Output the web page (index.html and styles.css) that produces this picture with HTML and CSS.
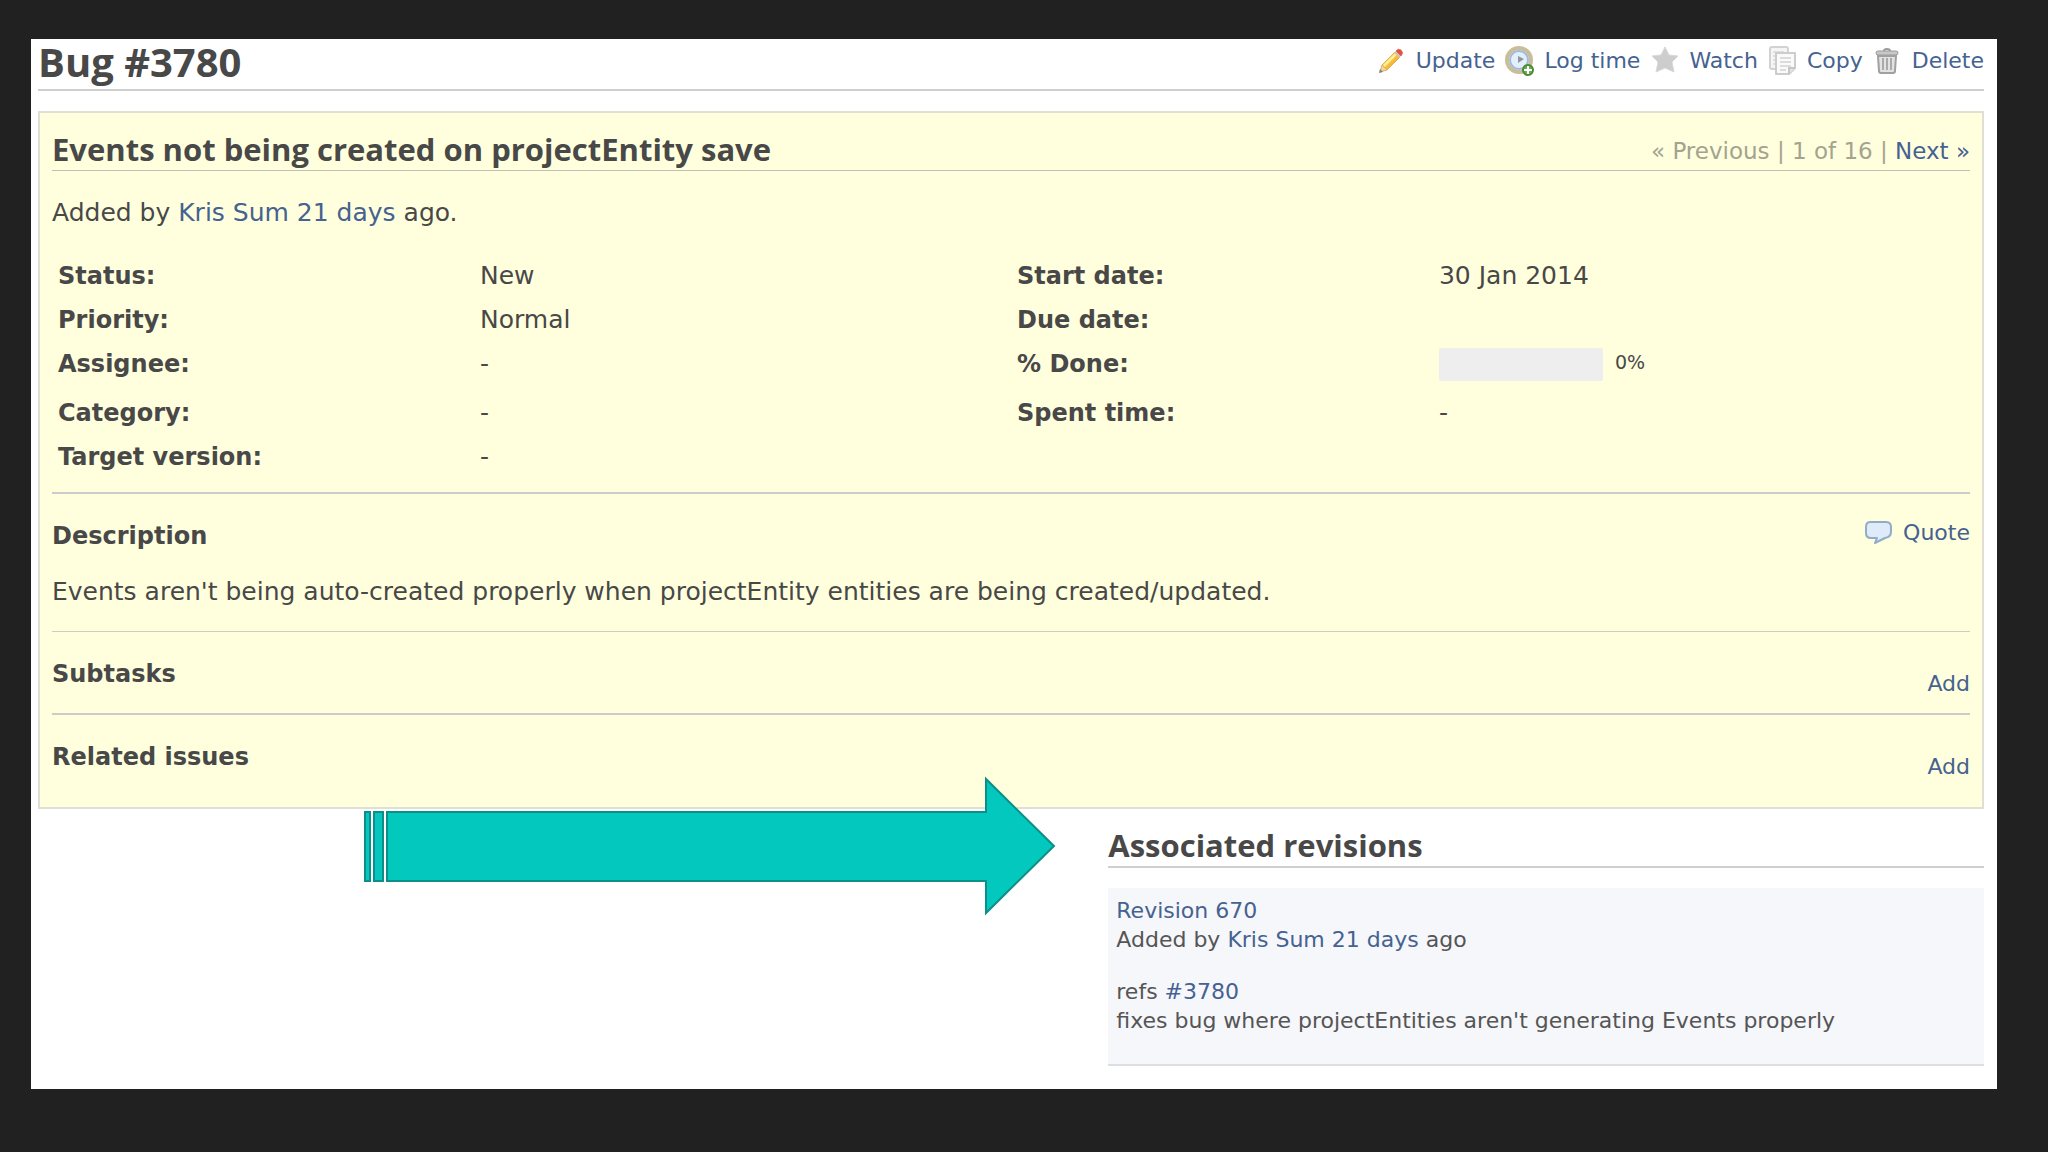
FILE: index.html
```html
<!DOCTYPE html>
<html lang="en">
<head>
    <meta charset="UTF-8">
    <meta name="viewport" content="width=device-width, initial-scale=1.0">
    <title>Bug #3780</title>
    <link rel="stylesheet" href="styles.css">
</head>
<body>
    <main class="page">
        <!-- Page header -->
        <header class="page-header">
            <h1>Bug #3780</h1>
            <nav class="actions">
                <a href="#update">
                    <svg class="icon" viewBox="0 0 30 30" aria-hidden="true">
                        <defs>
                            <linearGradient id="pencil" x1="0" y1="0" x2="1" y2="1">
                                <stop offset="0.3" stop-color="#ffe37a"/>
                                <stop offset="0.7" stop-color="#f3a71c"/>
                            </linearGradient>
                        </defs>
                        <path d="M4 26 L6 19 L11 24 Z" fill="#eed7a4" stroke="#d3b170"/>
                        <path d="M3 27 L4 23 L7 26 Z" fill="#8b8068"/>
                        <path d="M6 19 L19 6 L24 11 L11 24 Z" fill="url(#pencil)" stroke="#e8b04a"/>
                        <path d="M8 20 L21 7" stroke="#fff2a8" stroke-width="2"/>
                        <path d="M18 7 L20 5 L25 10 L23 12 Z" fill="#d9c0b4"/>
                        <path d="M20 5 Q22 2 25 4 Q28 7 25 10 Z" fill="#e0503c" stroke="#d9705e"/>
                    </svg>
                    Update</a>
                <a href="#log-time">
                    <svg class="icon" viewBox="0 0 30 30" aria-hidden="true">
                        <circle cx="15" cy="14" r="12" fill="#eef4fb" stroke="#cbbd98" stroke-width="4"/>
                        <circle cx="15" cy="14" r="9" fill="#e4effb" stroke="#9dbbdd" stroke-width="2"/>
                        <path d="M14 10 L20 13 L14 17 Z" fill="#8997a6"/>
                        <circle cx="24" cy="24" r="5" fill="#6cb04f" stroke="#4a8a38" stroke-width="2"/>
                        <path d="M24 20 V28 M20 24 H28" stroke="#fff" stroke-width="2"/>
                    </svg>
                    Log time</a>
                <a href="#watch">
                    <svg class="icon" viewBox="0 0 30 30" aria-hidden="true">
                        <path d="M16 1 L20 9 L29 10 L23 16 L25 26 L16 22 L7 26 L9 16 L3 10 L12 9 Z" fill="#cdcdcd" stroke="#d9d9d9" stroke-linejoin="round"/>
                    </svg>
                    Watch</a>
                <a href="#copy">
                    <svg class="icon" viewBox="0 0 30 30" aria-hidden="true">
                        <rect x="3" y="1" width="18" height="22" rx="2" fill="#f5f5f5" stroke="#d2d2d2" stroke-width="2"/>
                        <path d="M6 6 H17 M6 10 H8 M6 14 H8 M6 18 H8" stroke="#e0e0e0" stroke-width="2"/>
                        <path d="M9 7 H28 V22 L22 28 H9 Z" fill="#fafafa" stroke="#cccccc" stroke-width="2" stroke-linejoin="round"/>
                        <path d="M13 12 H24 M13 16 H24 M13 20 H24 M13 24 H19" stroke="#dcdcdc" stroke-width="2"/>
                        <path d="M28 22 H22 V28" fill="#e5e5e5" stroke="#c6c6c6" stroke-width="2"/>
                    </svg>
                    Copy</a>
                <a href="#delete">
                    <svg class="icon" viewBox="0 0 30 30" aria-hidden="true">
                        <path d="M12 5 Q12 3 15 3 Q18 3 18 5" fill="none" stroke="#9c9c9c" stroke-width="2"/>
                        <rect x="4" y="5" width="22" height="4" rx="2" fill="#c8c8c8" stroke="#9a9a9a"/>
                        <path d="M6 10 H24 L23 25 Q23 27 21 27 H9 Q7 27 7 25 Z" fill="#e2e2e2" stroke="#a0a0a0" stroke-width="2"/>
                        <path d="M11 12 V24 M15 12 V24 M19 12 V24" stroke="#aaaaaa" stroke-width="2"/>
                    </svg>
                    Delete</a>
            </nav>
        </header>

        <!-- Issue details -->
        <section class="issue">
            <div class="issue-title">
                <h2>Events not being created on projectEntity save</h2>
                <div class="pager">« Previous | 1 of 16 | <a href="#next">Next »</a></div>
            </div>
            <p class="author">Added by <a href="#user">Kris Sum</a> <a href="#activity">21 days</a> ago.</p>

            <table class="attributes">
                <tr>
                    <th scope="row">Status:</th><td>New</td>
                    <th scope="row">Start date:</th><td>30 Jan 2014</td>
                </tr>
                <tr>
                    <th scope="row">Priority:</th><td>Normal</td>
                    <th scope="row">Due date:</th><td></td>
                </tr>
                <tr class="progress-row">
                    <th scope="row">Assignee:</th><td>-</td>
                    <th scope="row">% Done:</th>
                    <td>
                        <div class="progress">
                            <div class="progress-bar"></div>
                            <span>0%</span>
                        </div>
                    </td>
                </tr>
                <tr>
                    <th scope="row">Category:</th><td>-</td>
                    <th scope="row">Spent time:</th><td>-</td>
                </tr>
                <tr>
                    <th scope="row">Target version:</th><td>-</td>
                    <th></th><td></td>
                </tr>
            </table>

            <div class="block description">
                <div class="block-head">
                    <h3>Description</h3>
                    <a class="quote" href="#quote">
                        <svg class="icon" viewBox="0 0 30 30" aria-hidden="true">
                            <path d="M7 4 H23 Q28 4 28 9 V14 Q28 19 22 20 L12 25 L14 20 H8 Q3 20 3 15 V9 Q3 4 7 4 Z" fill="#dfeafa" stroke="#90acc9" stroke-width="2" stroke-linejoin="round"/>
                        </svg>
                        Quote</a>
                </div>
                <p>Events aren't being auto-created properly when projectEntity entities are being created/updated.</p>
            </div>

            <div class="block subtasks">
                <h3>Subtasks</h3>
                <a href="#add-subtask">Add</a>
            </div>

            <div class="block related">
                <h3>Related issues</h3>
                <a href="#add-relation">Add</a>
            </div>
        </section>

        <!-- Revisions -->
        <section class="changesets">
            <svg class="arrow" viewBox="0 0 692 140" aria-hidden="true">
                <g fill="#03c8be" stroke="#0c8f88" stroke-width="2">
                    <rect x="1" y="36" width="5" height="69"/>
                    <rect x="10" y="36" width="9" height="69"/>
                    <path d="M23 36 H622 V3 L690 70 L622 137 V105 H23 Z"/>
                </g>
            </svg>
            <div class="revisions">
                <h2>Associated revisions</h2>
                <div class="changeset">
                    <p><a href="#r670">Revision 670</a><br>
                    Added by <a href="#user">Kris Sum</a> <a href="#activity">21 days</a> ago</p>
                    <p>refs <a href="#3780">#3780</a><br>
                    fixes bug where projectEntities aren't generating Events properly</p>
                </div>
            </div>
        </section>
    </main>
</body>
</html>
```
FILE: styles.css
```css
* {
    box-sizing: border-box;
}

body {
    margin: 0;
    padding: 39px 51px 39px 31px;
    background: #212121;
    color: #484848;
    font-family: Verdana, "DejaVu Sans", sans-serif;
    font-size: 22px;
    line-height: 28px;
}

h1, h2, h3, p {
    margin: 0;
}

h1, h2 {
    font-family: "Trebuchet MS", "Open Sans", sans-serif;
    font-weight: 700;
}

h1 {
    font-size: 40px;
    line-height: 46px;
}

h2 {
    font-size: 31px;
    line-height: 40px;
}

h3 {
    font-size: 24px;
    line-height: 36px;
}

a {
    color: #456290;
    text-decoration: none;
}

a:hover {
    text-decoration: underline;
}

.icon {
    width: 30px;
    height: 30px;
    flex: none;
}

.page {
    background: #fff;
    padding: 0 13px 23px 7px;
}

/* Header */
.page-header {
    display: flex;
    justify-content: space-between;
    align-items: flex-start;
    height: 52px;
    border-bottom: 2px solid #cfcfcf;
}

.actions {
    display: flex;
    gap: 9px;
    padding-top: 7px;
}

.actions a,
.quote {
    display: flex;
    align-items: center;
    gap: 10px;
}

/* Issue box */
.issue {
    margin-top: 20px;
    padding: 16px 12px 26px;
    background: #ffffdd;
    border: 2px solid #dfdfd6;
}

.issue-title {
    display: flex;
    justify-content: space-between;
    align-items: flex-start;
    height: 42px;
    border-bottom: 1px solid #bfbfb4;
}

.pager {
    padding-top: 8px;
    color: #a3a390;
    font-size: 23px;
}

.author {
    margin-top: 24px;
    font-size: 25px;
    line-height: 36px;
}

.attributes {
    width: 100%;
    margin-top: 23px;
    table-layout: fixed;
    border-collapse: collapse;
    font-size: 24px;
}

.attributes th,
.attributes td {
    height: 44px;
    padding: 0 6px;
    text-align: left;
}

.attributes th {
    width: 22%;
}

.attributes td {
    width: 28%;
    font-size: 25px;
}

.attributes .progress-row > * {
    height: 49px;
    padding-bottom: 5px;
}

.progress {
    display: flex;
    gap: 12px;
    font-size: 19px;
}

.progress-bar {
    width: 164px;
    height: 33px;
    background: #eee;
    border-radius: 2px;
}

.block {
    border-top: 2px solid #ccc;
}

.block-head,
.subtasks,
.related {
    display: flex;
    justify-content: space-between;
}

.description {
    margin-top: 13px;
    padding-top: 24px;
    height: 139px;
    font-size: 25px;
}

.description p {
    margin-top: 24px;
}

.quote {
    font-size: 22px;
    height: 30px;
}

.subtasks,
.related {
    padding-top: 24px;
}

.subtasks {
    height: 82px;
    border-top-width: 1px;
}

.subtasks a,
.related a {
    margin-top: 14px;
}

/* Revisions */
.changesets {
    position: relative;
    display: flex;
    justify-content: flex-end;
    padding-top: 16px;
}

.arrow {
    position: absolute;
    left: 326px;
    top: -33px;
    width: 692px;
    height: 140px;
}

.revisions {
    width: 45%;
}

.revisions h2 {
    height: 43px;
    border-bottom: 2px solid #cfcfd2;
}

.changeset {
    margin-top: 20px;
    padding: 8px 8px 29px;
    background: #f6f7fb;
    border-bottom: 2px solid #dcdee2;
    color: #555;
    line-height: 29px;
}

.changeset p + p {
    margin-top: 23px;
}
```
